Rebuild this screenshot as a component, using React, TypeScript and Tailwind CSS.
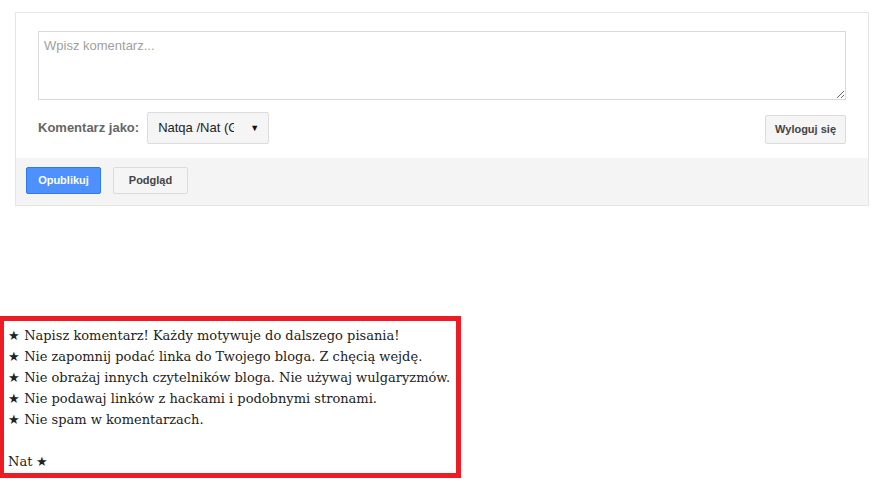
export default function App() {
  return (
    <div className="min-h-screen bg-white font-['Liberation_Sans',Arial,sans-serif]">
      {/* Comment form */}
      <div className="pt-[12px] pl-[15px] pr-[10px]">
        <div className="w-[854px] border border-[#e5e5e5] bg-white">
          <div className="px-[22px] pt-[18px] pb-[14px]">
            <textarea
              placeholder="Wpisz komentarz..."
              className="block w-full h-[69px] border border-[#d9d9d9] px-[5px] py-[5px] text-[13px] leading-[18px] text-[#333] placeholder:text-[#a0a0a0] outline-none"
            />
            <div className="mt-[12px] flex items-start justify-between">
              <div className="flex items-center">
                <span className="text-[13px] font-bold text-[#666] mr-[8px]">Komentarz jako:</span>
                <div className="relative flex items-center w-[122px] h-[32px] bg-[#f5f5f5] border border-[#dcdcdc] rounded-[2px] pl-[10px] text-[13px] text-[#222]">
                  <span className="block w-[76px] overflow-hidden whitespace-nowrap">Natqa /Nat (Google)</span>
                  <span className="absolute right-[9px] top-[9px] text-[9px] text-[#111]">▼</span>
                </div>
              </div>
              <button className="mt-[3px] h-[29px] px-[9px] bg-[#f5f5f5] border border-[#dcdcdc] rounded-[2px] text-[11px] font-bold text-[#444]">
                Wyloguj się
              </button>
            </div>
          </div>
          <div className="bg-[#f4f4f4] h-[47px] flex items-start pt-[9px] pl-[10px] gap-[12px]">
            <button className="h-[27px] w-[75px] bg-[#4d90fe] border border-[#3079ed] rounded-[2px] text-[11px] font-bold text-white">
              Opublikuj
            </button>
            <button className="h-[27px] w-[75px] bg-[#f5f5f5] border border-[#dcdcdc] rounded-[2px] text-[11px] font-bold text-[#444]">
              Podgląd
            </button>
          </div>
        </div>
      </div>

      {/* Rules box */}
      <div className="mt-[110px] -ml-px w-[462px] border-[5px] border-[#ed1c24] pt-[4px] pb-[1px] pl-[4px] font-['DejaVu_Serif',Georgia,serif] text-[13px] leading-[21px] text-[#222]">
        <div>★ Napisz komentarz! Każdy motywuje do dalszego pisania!</div>
        <div>★ Nie zapomnij podać linka do Twojego bloga. Z chęcią wejdę.</div>
        <div>★ Nie obrażaj innych czytelników bloga. Nie używaj wulgaryzmów.</div>
        <div>★ Nie podawaj linków z hackami i podobnymi stronami.</div>
        <div>★ Nie spam w komentarzach.</div>
        <div>&nbsp;</div>
        <div>Nat ★</div>
      </div>
    </div>
  );
}
